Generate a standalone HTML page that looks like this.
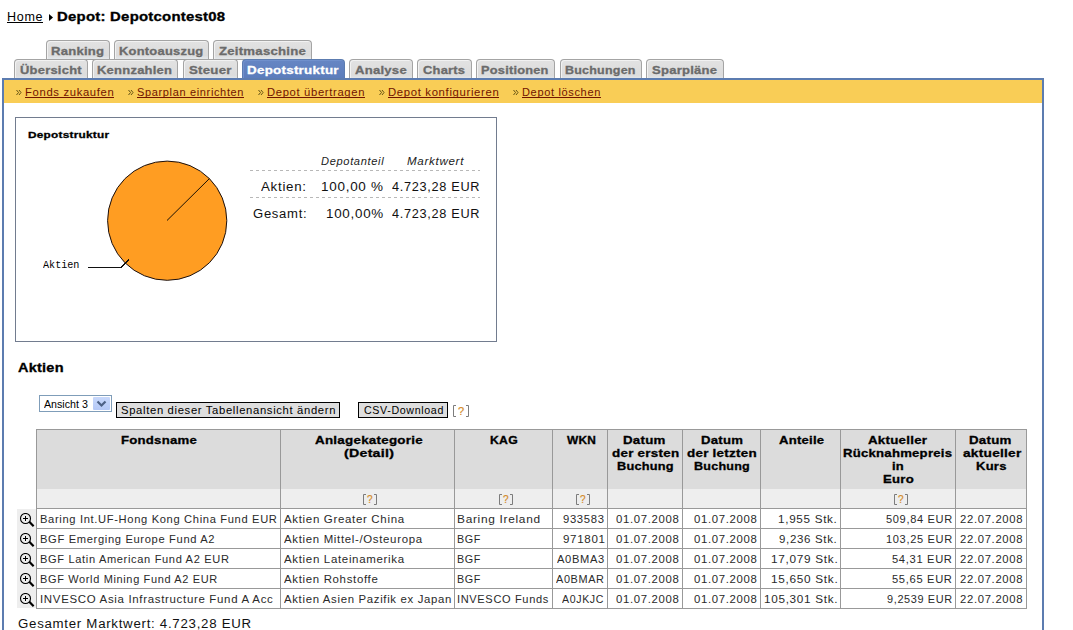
<!DOCTYPE html>
<html><head><meta charset="utf-8"><title>Depot</title>
<style>
html,body{margin:0;padding:0;background:#fff;width:1073px;height:630px;overflow:hidden;position:relative}
body{font-family:"Liberation Sans",sans-serif}
.t{position:absolute;white-space:nowrap;transform-origin:0 0;text-decoration-skip-ink:none}
.b{position:absolute;box-sizing:border-box}
.tab{position:absolute;box-sizing:border-box;border:1px solid #a4a4a4;border-bottom:none;border-radius:4px 4px 0 0;background:linear-gradient(#e2e2e2,#dcdcdc 80%,#e4e8ec);box-shadow:inset 1px 1px 0 #f2f2f2}
.tab.act{background:linear-gradient(#6686c4,#5b7cbb);border-color:#5c7cb0;box-shadow:inset 1px 1px 0 #7090cc}
</style></head><body>

<svg class="b" style="left:48px;top:13px" width="7" height="9"><path d="M1 1 L5 4.5 L1 8 Z" fill="#000"/></svg>
<div class="tab" style="left:46px;top:40px;width:64px;height:20px;border-bottom:1px solid #a0a0a0"></div>
<div class="tab" style="left:114px;top:40px;width:95px;height:20px;border-bottom:1px solid #a0a0a0"></div>
<div class="tab" style="left:213px;top:40px;width:99px;height:20px;border-bottom:1px solid #a0a0a0"></div>
<div class="tab" style="left:14px;top:59px;width:74px;height:20px"></div>
<div class="tab" style="left:92px;top:59px;width:86px;height:20px"></div>
<div class="tab" style="left:183px;top:59px;width:55px;height:20px"></div>
<div class="tab act" style="left:242px;top:59px;width:103px;height:20px"></div>
<div class="tab" style="left:349px;top:59px;width:64px;height:20px"></div>
<div class="tab" style="left:417px;top:59px;width:55px;height:20px"></div>
<div class="tab" style="left:476px;top:59px;width:79px;height:20px"></div>
<div class="tab" style="left:560px;top:59px;width:82px;height:20px"></div>
<div class="tab" style="left:646px;top:59px;width:78px;height:20px"></div>
<div class="b" style="left:2px;top:78px;width:1042px;height:600px;border:2px solid #5c7cb0;border-bottom:none"></div>
<div class="b" style="left:4px;top:80px;width:1038px;height:23px;background:#f9cd56"></div>
<svg class="b" style="left:16px;top:89px" width="7" height="7"><path d="M0.5 1 L2.5 3.5 L0.5 6 M3 1 L5 3.5 L3 6" fill="none" stroke="#5e4d10" stroke-width="0.95"/></svg>
<svg class="b" style="left:128px;top:89px" width="7" height="7"><path d="M0.5 1 L2.5 3.5 L0.5 6 M3 1 L5 3.5 L3 6" fill="none" stroke="#5e4d10" stroke-width="0.95"/></svg>
<svg class="b" style="left:258px;top:89px" width="7" height="7"><path d="M0.5 1 L2.5 3.5 L0.5 6 M3 1 L5 3.5 L3 6" fill="none" stroke="#5e4d10" stroke-width="0.95"/></svg>
<svg class="b" style="left:379px;top:89px" width="7" height="7"><path d="M0.5 1 L2.5 3.5 L0.5 6 M3 1 L5 3.5 L3 6" fill="none" stroke="#5e4d10" stroke-width="0.95"/></svg>
<svg class="b" style="left:513px;top:89px" width="7" height="7"><path d="M0.5 1 L2.5 3.5 L0.5 6 M3 1 L5 3.5 L3 6" fill="none" stroke="#5e4d10" stroke-width="0.95"/></svg>
<div class="b" style="left:15px;top:117px;width:482px;height:225px;border:1px solid #727c8f"></div>
<svg class="b" style="left:0;top:0" width="1073" height="630">
<circle cx="167.2" cy="220.7" r="59.6" fill="#ff9d22" stroke="#1a1010" stroke-width="1"/>
<line x1="167" y1="220.5" x2="209.5" y2="178.5" stroke="#000" stroke-width="0.9"/>
<polyline points="88,267.5 121,267.5 129,259.5" fill="none" stroke="#111" stroke-width="1" shape-rendering="crispEdges"/>
<line x1="250" y1="170.5" x2="480" y2="170.5" stroke="#b8b8b8" stroke-width="1" stroke-dasharray="3,3"/>
<line x1="250" y1="197.5" x2="480" y2="197.5" stroke="#b8b8b8" stroke-width="1" stroke-dasharray="3,3"/>
</svg>
<div class="b" style="left:39px;top:395px;width:73px;height:17px;border:1px solid #7f9db9;background:#fff"></div>
<div class="b" style="left:93px;top:397px;width:17px;height:13px;background:linear-gradient(#c8d8fb,#b4c8f6);border-radius:1px"></div>
<svg class="b" style="left:93px;top:397px" width="17" height="13"><path d="M4.5 4.5 L8.5 8.5 L12.5 4.5" fill="none" stroke="#4d6185" stroke-width="2.2"/></svg>
<div class="b" style="left:116px;top:402px;width:224px;height:16px;border:1px solid #000;background:#dedede"></div>
<div class="b" style="left:358px;top:402px;width:90px;height:16px;border:1px solid #000;background:#dedede"></div>
<div class="b" style="left:36px;top:429px;width:991px;height:180px;border:1px solid #999;background:#fff"></div>
<div class="b" style="left:37px;top:430px;width:989px;height:59px;background:#dcdcdc"></div>
<div class="b" style="left:37px;top:489px;width:989px;height:19px;background:#eeeeee"></div>
<div class="b" style="left:36px;top:508px;width:991px;height:1px;background:#999"></div>
<div class="b" style="left:36px;top:528px;width:991px;height:1px;background:#999"></div>
<div class="b" style="left:36px;top:548px;width:991px;height:1px;background:#999"></div>
<div class="b" style="left:36px;top:568px;width:991px;height:1px;background:#999"></div>
<div class="b" style="left:36px;top:588px;width:991px;height:1px;background:#999"></div>
<div class="b" style="left:280px;top:429px;width:1px;height:180px;background:#999"></div>
<div class="b" style="left:454px;top:429px;width:1px;height:180px;background:#999"></div>
<div class="b" style="left:552px;top:429px;width:1px;height:180px;background:#999"></div>
<div class="b" style="left:607px;top:429px;width:1px;height:180px;background:#999"></div>
<div class="b" style="left:682px;top:429px;width:1px;height:180px;background:#999"></div>
<div class="b" style="left:760px;top:429px;width:1px;height:180px;background:#999"></div>
<div class="b" style="left:840px;top:429px;width:1px;height:180px;background:#999"></div>
<div class="b" style="left:955px;top:429px;width:1px;height:180px;background:#999"></div>
<div class="b" style="left:17px;top:509px;width:19px;height:99px;background:#eeeeee"></div>
<svg class="b" style="left:19px;top:513px" width="16" height="16"><circle cx="6.5" cy="5.5" r="5" fill="none" stroke="#000" stroke-width="1.1"/><rect x="4" y="5" width="5" height="1" fill="#000"/><rect x="6" y="3" width="1" height="5" fill="#000"/><path d="M10.3 8.8 L14.6 13.3" stroke="#000" stroke-width="2.2"/></svg>
<svg class="b" style="left:19px;top:533px" width="16" height="16"><circle cx="6.5" cy="5.5" r="5" fill="none" stroke="#000" stroke-width="1.1"/><rect x="4" y="5" width="5" height="1" fill="#000"/><rect x="6" y="3" width="1" height="5" fill="#000"/><path d="M10.3 8.8 L14.6 13.3" stroke="#000" stroke-width="2.2"/></svg>
<svg class="b" style="left:19px;top:553px" width="16" height="16"><circle cx="6.5" cy="5.5" r="5" fill="none" stroke="#000" stroke-width="1.1"/><rect x="4" y="5" width="5" height="1" fill="#000"/><rect x="6" y="3" width="1" height="5" fill="#000"/><path d="M10.3 8.8 L14.6 13.3" stroke="#000" stroke-width="2.2"/></svg>
<svg class="b" style="left:19px;top:573px" width="16" height="16"><circle cx="6.5" cy="5.5" r="5" fill="none" stroke="#000" stroke-width="1.1"/><rect x="4" y="5" width="5" height="1" fill="#000"/><rect x="6" y="3" width="1" height="5" fill="#000"/><path d="M10.3 8.8 L14.6 13.3" stroke="#000" stroke-width="2.2"/></svg>
<svg class="b" style="left:19px;top:593px" width="16" height="16"><circle cx="6.5" cy="5.5" r="5" fill="none" stroke="#000" stroke-width="1.1"/><rect x="4" y="5" width="5" height="1" fill="#000"/><rect x="6" y="3" width="1" height="5" fill="#000"/><path d="M10.3 8.8 L14.6 13.3" stroke="#000" stroke-width="2.2"/></svg>
<svg class="b" style="left:453px;top:405px" width="16" height="12"><path d="M3 0.5 H0.5 V11.5 H3 M13 0.5 H15.5 V11.5 H13" fill="none" stroke="#7c7c7c" stroke-width="1"/></svg><div class="t" style="left:458.0px;top:404px;font-size:11px;line-height:14px;color:#d48c2c;-webkit-text-stroke:0.2px #d48c2c">?</div>
<svg class="b" style="left:363px;top:494px" width="14" height="11"><path d="M3 0.5 H0.5 V10.5 H3 M11 0.5 H13.5 V10.5 H11" fill="none" stroke="#7c7c7c" stroke-width="1"/></svg><div class="t" style="left:367.0px;top:493px;font-size:10px;line-height:13px;color:#d48c2c;-webkit-text-stroke:0.2px #d48c2c">?</div>
<svg class="b" style="left:499px;top:494px" width="14" height="11"><path d="M3 0.5 H0.5 V10.5 H3 M11 0.5 H13.5 V10.5 H11" fill="none" stroke="#7c7c7c" stroke-width="1"/></svg><div class="t" style="left:503.0px;top:493px;font-size:10px;line-height:13px;color:#d48c2c;-webkit-text-stroke:0.2px #d48c2c">?</div>
<svg class="b" style="left:576px;top:494px" width="14" height="11"><path d="M3 0.5 H0.5 V10.5 H3 M11 0.5 H13.5 V10.5 H11" fill="none" stroke="#7c7c7c" stroke-width="1"/></svg><div class="t" style="left:580.0px;top:493px;font-size:10px;line-height:13px;color:#d48c2c;-webkit-text-stroke:0.2px #d48c2c">?</div>
<svg class="b" style="left:894px;top:494px" width="14" height="11"><path d="M3 0.5 H0.5 V10.5 H3 M11 0.5 H13.5 V10.5 H11" fill="none" stroke="#7c7c7c" stroke-width="1"/></svg><div class="t" style="left:898.0px;top:493px;font-size:10px;line-height:13px;color:#d48c2c;-webkit-text-stroke:0.2px #d48c2c">?</div>
<div class="t" style="left:6.95px;top:9px;font-family:'Liberation Sans',sans-serif;font-size:12px;font-weight:normal;font-style:normal;letter-spacing:0.65px;line-height:16px;color:#000;transform:scaleX(1.0455)">Home</div>
<div class="b" style="left:7px;top:22px;width:36px;height:1px;background:#000"></div>
<div class="t" style="left:57.46px;top:9px;font-family:'Liberation Sans',sans-serif;font-size:12px;font-weight:bold;font-style:normal;letter-spacing:0.2px;line-height:16px;color:#000;-webkit-text-stroke:0.3px #000;transform:scaleX(1.2425)">Depot: Depotcontest08</div>
<div class="t" style="left:51.21px;top:44px;font-family:'Liberation Sans',sans-serif;font-size:11px;font-weight:bold;font-style:normal;letter-spacing:0.2px;line-height:15px;color:#6b6b6b;-webkit-text-stroke:0.3px #6b6b6b;transform:scaleX(1.1907)">Ranking</div>
<div class="t" style="left:119.23px;top:44px;font-family:'Liberation Sans',sans-serif;font-size:11px;font-weight:bold;font-style:normal;letter-spacing:0.2px;line-height:15px;color:#6b6b6b;-webkit-text-stroke:0.3px #6b6b6b;transform:scaleX(1.1743)">Kontoauszug</div>
<div class="t" style="left:219.40px;top:44px;font-family:'Liberation Sans',sans-serif;font-size:11px;font-weight:bold;font-style:normal;letter-spacing:0.2px;line-height:15px;color:#6b6b6b;-webkit-text-stroke:0.3px #6b6b6b;transform:scaleX(1.1972)">Zeitmaschine</div>
<div class="t" style="left:20.40px;top:63px;font-family:'Liberation Sans',sans-serif;font-size:11px;font-weight:bold;font-style:normal;letter-spacing:0.2px;line-height:15px;color:#6b6b6b;-webkit-text-stroke:0.3px #6b6b6b;transform:scaleX(1.1769)">Übersicht</div>
<div class="t" style="left:97.22px;top:63px;font-family:'Liberation Sans',sans-serif;font-size:11px;font-weight:bold;font-style:normal;letter-spacing:0.2px;line-height:15px;color:#6b6b6b;-webkit-text-stroke:0.3px #6b6b6b;transform:scaleX(1.1806)">Kennzahlen</div>
<div class="t" style="left:189.40px;top:63px;font-family:'Liberation Sans',sans-serif;font-size:11px;font-weight:bold;font-style:normal;letter-spacing:0.2px;line-height:15px;color:#6b6b6b;-webkit-text-stroke:0.3px #6b6b6b;transform:scaleX(1.2057)">Steuer</div>
<div class="t" style="left:247.18px;top:63px;font-family:'Liberation Sans',sans-serif;font-size:11px;font-weight:bold;font-style:normal;letter-spacing:0.2px;line-height:15px;color:#ffffff;-webkit-text-stroke:0.3px #ffffff;transform:scaleX(1.2189)">Depotstruktur</div>
<div class="t" style="left:355.40px;top:63px;font-family:'Liberation Sans',sans-serif;font-size:11px;font-weight:bold;font-style:normal;letter-spacing:0.2px;line-height:15px;color:#6b6b6b;-webkit-text-stroke:0.3px #6b6b6b;transform:scaleX(1.1907)">Analyse</div>
<div class="t" style="left:423.40px;top:63px;font-family:'Liberation Sans',sans-serif;font-size:11px;font-weight:bold;font-style:normal;letter-spacing:0.2px;line-height:15px;color:#6b6b6b;-webkit-text-stroke:0.3px #6b6b6b;transform:scaleX(1.1722)">Charts</div>
<div class="t" style="left:481.24px;top:63px;font-family:'Liberation Sans',sans-serif;font-size:11px;font-weight:bold;font-style:normal;letter-spacing:0.2px;line-height:15px;color:#6b6b6b;-webkit-text-stroke:0.3px #6b6b6b;transform:scaleX(1.1614)">Positionen</div>
<div class="t" style="left:565.27px;top:63px;font-family:'Liberation Sans',sans-serif;font-size:11px;font-weight:bold;font-style:normal;letter-spacing:0.2px;line-height:15px;color:#6b6b6b;-webkit-text-stroke:0.3px #6b6b6b;transform:scaleX(1.1344)">Buchungen</div>
<div class="t" style="left:652.40px;top:63px;font-family:'Liberation Sans',sans-serif;font-size:11px;font-weight:bold;font-style:normal;letter-spacing:0.2px;line-height:15px;color:#6b6b6b;-webkit-text-stroke:0.3px #6b6b6b;transform:scaleX(1.1855)">Sparpläne</div>
<div class="t" style="left:24.98px;top:85px;font-family:'Liberation Sans',sans-serif;font-size:11px;font-weight:normal;font-style:normal;letter-spacing:0.65px;line-height:15px;color:#721400;transform:scaleX(1.0235)">Fonds zukaufen</div>
<div class="b" style="left:25px;top:97px;width:89px;height:1px;background:#721400"></div>
<div class="t" style="left:137.00px;top:85px;font-family:'Liberation Sans',sans-serif;font-size:11px;font-weight:normal;font-style:normal;letter-spacing:0.65px;line-height:15px;color:#721400;transform:scaleX(1.0000)">Sparplan einrichten</div>
<div class="b" style="left:137px;top:97px;width:107px;height:1px;background:#721400"></div>
<div class="t" style="left:266.98px;top:85px;font-family:'Liberation Sans',sans-serif;font-size:11px;font-weight:normal;font-style:normal;letter-spacing:0.65px;line-height:15px;color:#721400;transform:scaleX(1.0213)">Depot übertragen</div>
<div class="b" style="left:267px;top:97px;width:98px;height:1px;background:#721400"></div>
<div class="t" style="left:387.97px;top:85px;font-family:'Liberation Sans',sans-serif;font-size:11px;font-weight:normal;font-style:normal;letter-spacing:0.65px;line-height:15px;color:#721400;transform:scaleX(1.0283)">Depot konfigurieren</div>
<div class="b" style="left:388px;top:97px;width:111px;height:1px;background:#721400"></div>
<div class="t" style="left:522.00px;top:85px;font-family:'Liberation Sans',sans-serif;font-size:11px;font-weight:normal;font-style:normal;letter-spacing:0.65px;line-height:15px;color:#721400;transform:scaleX(1.0026)">Depot löschen</div>
<div class="b" style="left:522px;top:97px;width:79px;height:1px;background:#721400"></div>
<div class="t" style="left:28.00px;top:128px;font-family:'Liberation Sans',sans-serif;font-size:9.5px;font-weight:bold;font-style:normal;letter-spacing:0.2px;line-height:13.5px;color:#000;-webkit-text-stroke:0.3px #000;transform:scaleX(1.2431)">Depotstruktur</div>
<div class="t" style="left:42.90px;top:259px;font-family:'Liberation Mono',sans-serif;font-size:10px;font-weight:normal;font-style:normal;letter-spacing:0.0px;line-height:14px;color:#000;transform:scaleX(1.0114)">Aktien</div>
<div class="t" style="left:320.70px;top:154px;font-family:'Liberation Sans',sans-serif;font-size:11px;font-weight:normal;font-style:italic;letter-spacing:0.65px;line-height:15px;color:#222;transform:scaleX(1.0079)">Depotanteil</div>
<div class="t" style="left:407.20px;top:154px;font-family:'Liberation Sans',sans-serif;font-size:11px;font-weight:normal;font-style:italic;letter-spacing:0.65px;line-height:15px;color:#222;transform:scaleX(1.0537)">Marktwert</div>
<div class="t" style="left:260.80px;top:179px;font-family:'Liberation Sans',sans-serif;font-size:12px;font-weight:normal;font-style:normal;letter-spacing:0.65px;line-height:16px;color:#111;transform:scaleX(1.1100)">Aktien:</div>
<div class="t" style="left:321.28px;top:179px;font-family:'Liberation Sans',sans-serif;font-size:12px;font-weight:normal;font-style:normal;letter-spacing:0.65px;line-height:16px;color:#111;transform:scaleX(1.1222)">100,00 %</div>
<div class="t" style="left:392.20px;top:179px;font-family:'Liberation Sans',sans-serif;font-size:12px;font-weight:normal;font-style:normal;letter-spacing:0.65px;line-height:16px;color:#111;transform:scaleX(1.0610)">4.723,28 EUR</div>
<div class="t" style="left:252.90px;top:206px;font-family:'Liberation Sans',sans-serif;font-size:12px;font-weight:normal;font-style:normal;letter-spacing:0.65px;line-height:16px;color:#111;transform:scaleX(1.0896)">Gesamt:</div>
<div class="t" style="left:326.08px;top:206px;font-family:'Liberation Sans',sans-serif;font-size:12px;font-weight:normal;font-style:normal;letter-spacing:0.65px;line-height:16px;color:#111;transform:scaleX(1.1160)">100,00%</div>
<div class="t" style="left:392.20px;top:206px;font-family:'Liberation Sans',sans-serif;font-size:12px;font-weight:normal;font-style:normal;letter-spacing:0.65px;line-height:16px;color:#111;transform:scaleX(1.0610)">4.723,28 EUR</div>
<div class="t" style="left:17.60px;top:360px;font-family:'Liberation Sans',sans-serif;font-size:12px;font-weight:bold;font-style:normal;letter-spacing:0.2px;line-height:16px;color:#000;-webkit-text-stroke:0.3px #000;transform:scaleX(1.2081)">Aktien</div>
<div class="t" style="left:44.10px;top:397px;font-family:'Liberation Sans',sans-serif;font-size:11px;font-weight:normal;font-style:normal;letter-spacing:0.0px;line-height:15px;color:#000;transform:scaleX(0.9689)">Ansicht 3</div>
<div class="t" style="left:120.58px;top:403px;font-family:'Liberation Sans',sans-serif;font-size:11px;font-weight:normal;font-style:normal;letter-spacing:0.65px;line-height:15px;color:#000;transform:scaleX(1.0226)">Spalten dieser Tabellenansicht ändern</div>
<div class="t" style="left:363.70px;top:403px;font-family:'Liberation Sans',sans-serif;font-size:11px;font-weight:normal;font-style:normal;letter-spacing:0.65px;line-height:15px;color:#000;transform:scaleX(0.9704)">CSV-Download</div>
<div class="t" style="left:17.80px;top:616px;font-family:'Liberation Sans',sans-serif;font-size:12px;font-weight:normal;font-style:normal;letter-spacing:0.65px;line-height:16px;color:#111;transform:scaleX(1.1052)">Gesamter Marktwert: 4.723,28 EUR</div>
<div class="t" style="left:120.60px;top:433px;font-family:'Liberation Sans',sans-serif;font-size:11px;font-weight:bold;font-style:normal;letter-spacing:0.2px;line-height:15px;color:#000;-webkit-text-stroke:0.3px #000;transform:scaleX(1.1968)">Fondsname</div>
<div class="t" style="left:314.70px;top:433px;font-family:'Liberation Sans',sans-serif;font-size:11px;font-weight:bold;font-style:normal;letter-spacing:0.2px;line-height:15px;color:#000;-webkit-text-stroke:0.3px #000;transform:scaleX(1.2182)">Anlagekategorie</div>
<div class="t" style="left:343.60px;top:446px;font-family:'Liberation Sans',sans-serif;font-size:11px;font-weight:bold;font-style:normal;letter-spacing:0.2px;line-height:15px;color:#000;-webkit-text-stroke:0.3px #000;transform:scaleX(1.2895)">(Detail)</div>
<div class="t" style="left:490.29px;top:433px;font-family:'Liberation Sans',sans-serif;font-size:11px;font-weight:bold;font-style:normal;letter-spacing:0.2px;line-height:15px;color:#000;-webkit-text-stroke:0.3px #000;transform:scaleX(1.1130)">KAG</div>
<div class="t" style="left:566.50px;top:433px;font-family:'Liberation Sans',sans-serif;font-size:11px;font-weight:bold;font-style:normal;letter-spacing:0.2px;line-height:15px;color:#000;-webkit-text-stroke:0.3px #000;transform:scaleX(1.0808)">WKN</div>
<div class="t" style="left:622.99px;top:433px;font-family:'Liberation Sans',sans-serif;font-size:11px;font-weight:bold;font-style:normal;letter-spacing:0.2px;line-height:15px;color:#000;-webkit-text-stroke:0.3px #000;transform:scaleX(1.2088)">Datum</div>
<div class="t" style="left:611.60px;top:446px;font-family:'Liberation Sans',sans-serif;font-size:11px;font-weight:bold;font-style:normal;letter-spacing:0.2px;line-height:15px;color:#000;-webkit-text-stroke:0.3px #000;transform:scaleX(1.2200)">der ersten</div>
<div class="t" style="left:616.94px;top:459px;font-family:'Liberation Sans',sans-serif;font-size:11px;font-weight:bold;font-style:normal;letter-spacing:0.2px;line-height:15px;color:#000;-webkit-text-stroke:0.3px #000;transform:scaleX(1.1596)">Buchung</div>
<div class="t" style="left:700.61px;top:433px;font-family:'Liberation Sans',sans-serif;font-size:11px;font-weight:bold;font-style:normal;letter-spacing:0.2px;line-height:15px;color:#000;-webkit-text-stroke:0.3px #000;transform:scaleX(1.1941)">Datum</div>
<div class="t" style="left:686.70px;top:446px;font-family:'Liberation Sans',sans-serif;font-size:11px;font-weight:bold;font-style:normal;letter-spacing:0.2px;line-height:15px;color:#000;-webkit-text-stroke:0.3px #000;transform:scaleX(1.2211)">der letzten</div>
<div class="t" style="left:693.66px;top:459px;font-family:'Liberation Sans',sans-serif;font-size:11px;font-weight:bold;font-style:normal;letter-spacing:0.2px;line-height:15px;color:#000;-webkit-text-stroke:0.3px #000;transform:scaleX(1.1404)">Buchung</div>
<div class="t" style="left:778.60px;top:433px;font-family:'Liberation Sans',sans-serif;font-size:11px;font-weight:bold;font-style:normal;letter-spacing:0.2px;line-height:15px;color:#000;-webkit-text-stroke:0.3px #000;transform:scaleX(1.1921)">Anteile</div>
<div class="t" style="left:868.30px;top:433px;font-family:'Liberation Sans',sans-serif;font-size:11px;font-weight:bold;font-style:normal;letter-spacing:0.2px;line-height:15px;color:#000;-webkit-text-stroke:0.3px #000;transform:scaleX(1.2122)">Aktueller</div>
<div class="t" style="left:843.21px;top:446px;font-family:'Liberation Sans',sans-serif;font-size:11px;font-weight:bold;font-style:normal;letter-spacing:0.2px;line-height:15px;color:#000;-webkit-text-stroke:0.3px #000;transform:scaleX(1.1944)">Rücknahmepreis</div>
<div class="t" style="left:891.62px;top:459px;font-family:'Liberation Sans',sans-serif;font-size:11px;font-weight:bold;font-style:normal;letter-spacing:0.2px;line-height:15px;color:#000;-webkit-text-stroke:0.3px #000;transform:scaleX(1.1778)">in</div>
<div class="t" style="left:882.70px;top:472px;font-family:'Liberation Sans',sans-serif;font-size:11px;font-weight:bold;font-style:normal;letter-spacing:0.2px;line-height:15px;color:#000;-webkit-text-stroke:0.3px #000;transform:scaleX(1.1958)">Euro</div>
<div class="t" style="left:969.49px;top:433px;font-family:'Liberation Sans',sans-serif;font-size:11px;font-weight:bold;font-style:normal;letter-spacing:0.2px;line-height:15px;color:#000;-webkit-text-stroke:0.3px #000;transform:scaleX(1.2088)">Datum</div>
<div class="t" style="left:962.50px;top:446px;font-family:'Liberation Sans',sans-serif;font-size:11px;font-weight:bold;font-style:normal;letter-spacing:0.2px;line-height:15px;color:#000;-webkit-text-stroke:0.3px #000;transform:scaleX(1.2447)">aktueller</div>
<div class="t" style="left:976.02px;top:459px;font-family:'Liberation Sans',sans-serif;font-size:11px;font-weight:bold;font-style:normal;letter-spacing:0.2px;line-height:15px;color:#000;-webkit-text-stroke:0.3px #000;transform:scaleX(1.1833)">Kurs</div>
<div class="t" style="left:39.89px;top:512px;font-family:'Liberation Sans',sans-serif;font-size:11px;font-weight:normal;font-style:normal;letter-spacing:0.65px;line-height:15px;color:#2a2a2a;transform:scaleX(1.0134)">Baring Int.UF-Hong Kong China Fund EUR</div>
<div class="t" style="left:284.30px;top:512px;font-family:'Liberation Sans',sans-serif;font-size:11px;font-weight:normal;font-style:normal;letter-spacing:0.65px;line-height:15px;color:#2a2a2a;transform:scaleX(1.0435)">Aktien Greater China</div>
<div class="t" style="left:457.22px;top:512px;font-family:'Liberation Sans',sans-serif;font-size:11px;font-weight:normal;font-style:normal;letter-spacing:0.65px;line-height:15px;color:#2a2a2a;transform:scaleX(1.0800)">Baring Ireland</div>
<div class="t" style="left:562.70px;top:512px;font-family:'Liberation Sans',sans-serif;font-size:11px;font-weight:normal;font-style:normal;letter-spacing:0.65px;line-height:15px;color:#2a2a2a;transform:scaleX(1.0250)">933583</div>
<div class="t" style="left:615.60px;top:512px;font-family:'Liberation Sans',sans-serif;font-size:11px;font-weight:normal;font-style:normal;letter-spacing:0.65px;line-height:15px;color:#2a2a2a;transform:scaleX(1.0328)">01.07.2008</div>
<div class="t" style="left:693.50px;top:512px;font-family:'Liberation Sans',sans-serif;font-size:11px;font-weight:normal;font-style:normal;letter-spacing:0.65px;line-height:15px;color:#2a2a2a;transform:scaleX(1.0328)">01.07.2008</div>
<div class="t" style="left:777.94px;top:512px;font-family:'Liberation Sans',sans-serif;font-size:11px;font-weight:normal;font-style:normal;letter-spacing:0.65px;line-height:15px;color:#2a2a2a;transform:scaleX(1.0630)">1,955 Stk.</div>
<div class="t" style="left:885.79px;top:512px;font-family:'Liberation Sans',sans-serif;font-size:11px;font-weight:normal;font-style:normal;letter-spacing:0.65px;line-height:15px;color:#2a2a2a;transform:scaleX(1.0063)">509,84 EUR</div>
<div class="t" style="left:959.90px;top:512px;font-family:'Liberation Sans',sans-serif;font-size:11px;font-weight:normal;font-style:normal;letter-spacing:0.65px;line-height:15px;color:#2a2a2a;transform:scaleX(1.0262)">22.07.2008</div>
<div class="t" style="left:39.89px;top:532px;font-family:'Liberation Sans',sans-serif;font-size:11px;font-weight:normal;font-style:normal;letter-spacing:0.65px;line-height:15px;color:#2a2a2a;transform:scaleX(1.0135)">BGF Emerging Europe Fund A2</div>
<div class="t" style="left:284.30px;top:532px;font-family:'Liberation Sans',sans-serif;font-size:11px;font-weight:normal;font-style:normal;letter-spacing:0.65px;line-height:15px;color:#2a2a2a;transform:scaleX(1.0383)">Aktien Mittel-/Osteuropa</div>
<div class="t" style="left:457.32px;top:532px;font-family:'Liberation Sans',sans-serif;font-size:11px;font-weight:normal;font-style:normal;letter-spacing:0.65px;line-height:15px;color:#2a2a2a;transform:scaleX(0.9783)">BGF</div>
<div class="t" style="left:562.70px;top:532px;font-family:'Liberation Sans',sans-serif;font-size:11px;font-weight:normal;font-style:normal;letter-spacing:0.65px;line-height:15px;color:#2a2a2a;transform:scaleX(1.0513)">971801</div>
<div class="t" style="left:615.60px;top:532px;font-family:'Liberation Sans',sans-serif;font-size:11px;font-weight:normal;font-style:normal;letter-spacing:0.65px;line-height:15px;color:#2a2a2a;transform:scaleX(1.0328)">01.07.2008</div>
<div class="t" style="left:693.50px;top:532px;font-family:'Liberation Sans',sans-serif;font-size:11px;font-weight:normal;font-style:normal;letter-spacing:0.65px;line-height:15px;color:#2a2a2a;transform:scaleX(1.0328)">01.07.2008</div>
<div class="t" style="left:779.00px;top:532px;font-family:'Liberation Sans',sans-serif;font-size:11px;font-weight:normal;font-style:normal;letter-spacing:0.65px;line-height:15px;color:#2a2a2a;transform:scaleX(1.0436)">9,236 Stk.</div>
<div class="t" style="left:885.79px;top:532px;font-family:'Liberation Sans',sans-serif;font-size:11px;font-weight:normal;font-style:normal;letter-spacing:0.65px;line-height:15px;color:#2a2a2a;transform:scaleX(1.0063)">103,25 EUR</div>
<div class="t" style="left:959.90px;top:532px;font-family:'Liberation Sans',sans-serif;font-size:11px;font-weight:normal;font-style:normal;letter-spacing:0.65px;line-height:15px;color:#2a2a2a;transform:scaleX(1.0262)">22.07.2008</div>
<div class="t" style="left:39.89px;top:552px;font-family:'Liberation Sans',sans-serif;font-size:11px;font-weight:normal;font-style:normal;letter-spacing:0.65px;line-height:15px;color:#2a2a2a;transform:scaleX(1.0070)">BGF Latin American Fund A2 EUR</div>
<div class="t" style="left:284.30px;top:552px;font-family:'Liberation Sans',sans-serif;font-size:11px;font-weight:normal;font-style:normal;letter-spacing:0.65px;line-height:15px;color:#2a2a2a;transform:scaleX(1.0435)">Aktien Lateinamerika</div>
<div class="t" style="left:457.32px;top:552px;font-family:'Liberation Sans',sans-serif;font-size:11px;font-weight:normal;font-style:normal;letter-spacing:0.65px;line-height:15px;color:#2a2a2a;transform:scaleX(0.9783)">BGF</div>
<div class="t" style="left:557.20px;top:552px;font-family:'Liberation Sans',sans-serif;font-size:11px;font-weight:normal;font-style:normal;letter-spacing:0.65px;line-height:15px;color:#2a2a2a;transform:scaleX(1.0109)">A0BMA3</div>
<div class="t" style="left:615.60px;top:552px;font-family:'Liberation Sans',sans-serif;font-size:11px;font-weight:normal;font-style:normal;letter-spacing:0.65px;line-height:15px;color:#2a2a2a;transform:scaleX(1.0328)">01.07.2008</div>
<div class="t" style="left:693.50px;top:552px;font-family:'Liberation Sans',sans-serif;font-size:11px;font-weight:normal;font-style:normal;letter-spacing:0.65px;line-height:15px;color:#2a2a2a;transform:scaleX(1.0328)">01.07.2008</div>
<div class="t" style="left:770.93px;top:552px;font-family:'Liberation Sans',sans-serif;font-size:11px;font-weight:normal;font-style:normal;letter-spacing:0.65px;line-height:15px;color:#2a2a2a;transform:scaleX(1.0733)">17,079 Stk.</div>
<div class="t" style="left:892.28px;top:552px;font-family:'Liberation Sans',sans-serif;font-size:11px;font-weight:normal;font-style:normal;letter-spacing:0.65px;line-height:15px;color:#2a2a2a;transform:scaleX(1.0158)">54,31 EUR</div>
<div class="t" style="left:959.90px;top:552px;font-family:'Liberation Sans',sans-serif;font-size:11px;font-weight:normal;font-style:normal;letter-spacing:0.65px;line-height:15px;color:#2a2a2a;transform:scaleX(1.0262)">22.07.2008</div>
<div class="t" style="left:39.90px;top:572px;font-family:'Liberation Sans',sans-serif;font-size:11px;font-weight:normal;font-style:normal;letter-spacing:0.65px;line-height:15px;color:#2a2a2a;transform:scaleX(0.9983)">BGF World Mining Fund A2 EUR</div>
<div class="t" style="left:284.30px;top:572px;font-family:'Liberation Sans',sans-serif;font-size:11px;font-weight:normal;font-style:normal;letter-spacing:0.65px;line-height:15px;color:#2a2a2a;transform:scaleX(1.0389)">Aktien Rohstoffe</div>
<div class="t" style="left:457.32px;top:572px;font-family:'Liberation Sans',sans-serif;font-size:11px;font-weight:normal;font-style:normal;letter-spacing:0.65px;line-height:15px;color:#2a2a2a;transform:scaleX(0.9783)">BGF</div>
<div class="t" style="left:556.20px;top:572px;font-family:'Liberation Sans',sans-serif;font-size:11px;font-weight:normal;font-style:normal;letter-spacing:0.65px;line-height:15px;color:#2a2a2a;transform:scaleX(0.9896)">A0BMAR</div>
<div class="t" style="left:615.60px;top:572px;font-family:'Liberation Sans',sans-serif;font-size:11px;font-weight:normal;font-style:normal;letter-spacing:0.65px;line-height:15px;color:#2a2a2a;transform:scaleX(1.0328)">01.07.2008</div>
<div class="t" style="left:693.50px;top:572px;font-family:'Liberation Sans',sans-serif;font-size:11px;font-weight:normal;font-style:normal;letter-spacing:0.65px;line-height:15px;color:#2a2a2a;transform:scaleX(1.0328)">01.07.2008</div>
<div class="t" style="left:770.93px;top:572px;font-family:'Liberation Sans',sans-serif;font-size:11px;font-weight:normal;font-style:normal;letter-spacing:0.65px;line-height:15px;color:#2a2a2a;transform:scaleX(1.0733)">15,650 Stk.</div>
<div class="t" style="left:892.28px;top:572px;font-family:'Liberation Sans',sans-serif;font-size:11px;font-weight:normal;font-style:normal;letter-spacing:0.65px;line-height:15px;color:#2a2a2a;transform:scaleX(1.0158)">55,65 EUR</div>
<div class="t" style="left:959.90px;top:572px;font-family:'Liberation Sans',sans-serif;font-size:11px;font-weight:normal;font-style:normal;letter-spacing:0.65px;line-height:15px;color:#2a2a2a;transform:scaleX(1.0262)">22.07.2008</div>
<div class="t" style="left:39.86px;top:592px;font-family:'Liberation Sans',sans-serif;font-size:11px;font-weight:normal;font-style:normal;letter-spacing:0.65px;line-height:15px;color:#2a2a2a;transform:scaleX(1.0423)">INVESCO Asia Infrastructure Fund A Acc</div>
<div class="t" style="left:284.30px;top:592px;font-family:'Liberation Sans',sans-serif;font-size:11px;font-weight:normal;font-style:normal;letter-spacing:0.65px;line-height:15px;color:#2a2a2a;transform:scaleX(1.0342)">Aktien Asien Pazifik ex Japan</div>
<div class="t" style="left:457.30px;top:592px;font-family:'Liberation Sans',sans-serif;font-size:11px;font-weight:normal;font-style:normal;letter-spacing:0.65px;line-height:15px;color:#2a2a2a;transform:scaleX(1.0033)">INVESCO Funds</div>
<div class="t" style="left:562.30px;top:592px;font-family:'Liberation Sans',sans-serif;font-size:11px;font-weight:normal;font-style:normal;letter-spacing:0.65px;line-height:15px;color:#2a2a2a;transform:scaleX(0.9628)">A0JKJC</div>
<div class="t" style="left:615.60px;top:592px;font-family:'Liberation Sans',sans-serif;font-size:11px;font-weight:normal;font-style:normal;letter-spacing:0.65px;line-height:15px;color:#2a2a2a;transform:scaleX(1.0328)">01.07.2008</div>
<div class="t" style="left:693.50px;top:592px;font-family:'Liberation Sans',sans-serif;font-size:11px;font-weight:normal;font-style:normal;letter-spacing:0.65px;line-height:15px;color:#2a2a2a;transform:scaleX(1.0328)">01.07.2008</div>
<div class="t" style="left:763.83px;top:592px;font-family:'Liberation Sans',sans-serif;font-size:11px;font-weight:normal;font-style:normal;letter-spacing:0.65px;line-height:15px;color:#2a2a2a;transform:scaleX(1.0672)">105,301 Stk.</div>
<div class="t" style="left:886.80px;top:592px;font-family:'Liberation Sans',sans-serif;font-size:11px;font-weight:normal;font-style:normal;letter-spacing:0.65px;line-height:15px;color:#2a2a2a;transform:scaleX(0.9908)">9,2539 EUR</div>
<div class="t" style="left:959.90px;top:592px;font-family:'Liberation Sans',sans-serif;font-size:11px;font-weight:normal;font-style:normal;letter-spacing:0.65px;line-height:15px;color:#2a2a2a;transform:scaleX(1.0262)">22.07.2008</div>
</body></html>
